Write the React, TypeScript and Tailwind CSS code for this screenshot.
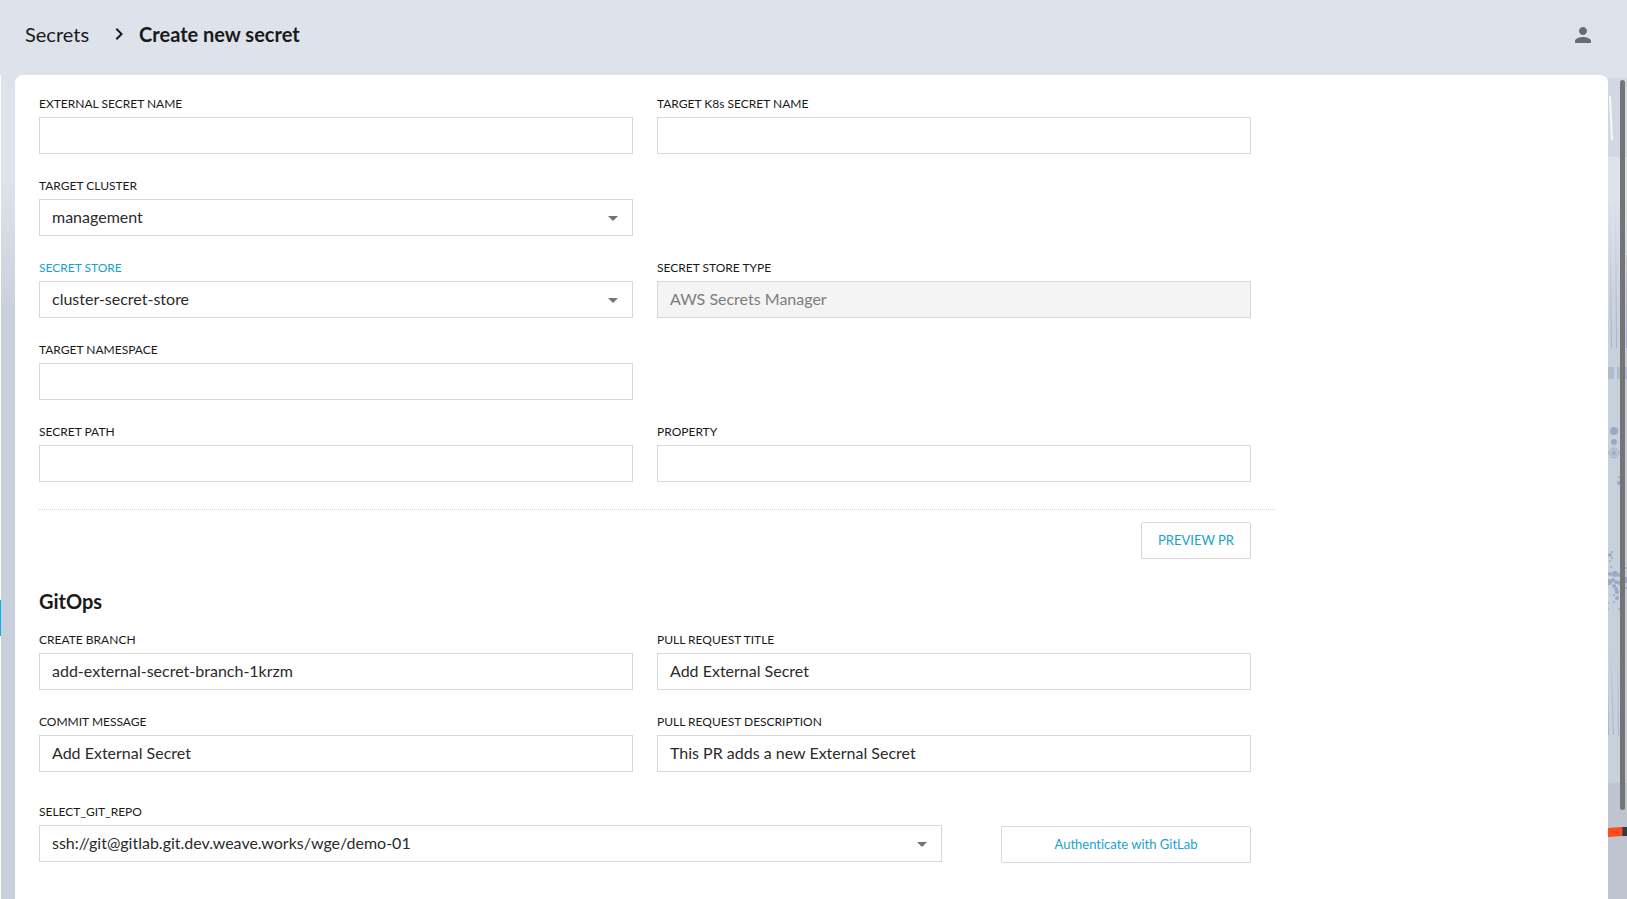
import React, { useState } from 'react';

interface FieldProps {
  id: string;
  label: string;
  className?: string;
}

interface TextFieldProps extends FieldProps {
  initial?: string;
  disabled?: boolean;
}

interface SelectFieldProps extends FieldProps {
  options: string[];
  active?: boolean;
}

const labelClasses = 'mb-[5px] block text-[12px] leading-4';
const controlClasses =
  'block h-[37px] w-full appearance-none rounded-none border border-[#d8d8d8] px-3 pb-0.5 text-[16px] focus:outline-none';

const TextField: React.FC<TextFieldProps> = ({ id, label, initial = '', disabled = false, className = '' }) => {
  const [value, setValue] = useState(initial);

  return (
    <div className={`mb-6 ${className}`}>
      <label htmlFor={id} className={`${labelClasses} text-[#1a1a1a]`}>
        {label}
      </label>
      <input
        id={id}
        type="text"
        value={value}
        disabled={disabled}
        onChange={(e) => setValue(e.target.value)}
        className={`${controlClasses} ${disabled ? 'bg-[#f4f4f4] text-[#7d7d7d]' : 'bg-white text-[#2b2b2b]'}`}
      />
    </div>
  );
};

const SelectField: React.FC<SelectFieldProps> = ({ id, label, options, active = false, className = '' }) => (
  <div className={`mb-6 ${className}`}>
    <label htmlFor={id} className={`${labelClasses} ${active ? 'text-[#1a9fd0]' : 'text-[#1a1a1a]'}`}>
      {label}
    </label>
    <div className="relative">
      <select id={id} className={`${controlClasses} bg-white pr-10 text-[#2b2b2b]`}>
        {options.map((option) => (
          <option key={option}>{option}</option>
        ))}
      </select>
      <svg
        viewBox="0 0 24 24"
        className="pointer-events-none absolute top-[7px] right-2 h-6 w-6"
        fill="#737373"
      >
        <path d="M7 10l5 5 5-5z" />
      </svg>
    </div>
  </div>
);

const outlineButton =
  'h-[37px] rounded-xs border border-[#d8d8d8] bg-white pb-0.5 text-[#1a9fd0] text-[13px] leading-5 hover:bg-gray-50';

// Small dots of the backdrop illustration: [x, y, radius]
const dots: [number, number, number][] = [
  [6, 356, 4],
  [6, 367, 3],
  [11, 402, 1],
  [11, 408, 2],
  [2, 480, 2],
  [4, 477, 1],
  [4, 483, 1],
  [2, 486, 1],
  [3, 492, 1],
  [2, 499, 2],
  [7, 499, 3],
  [11, 500, 2],
  [1, 507, 3],
  [5, 505, 2],
  [8, 507, 2],
  [11, 508, 2],
  [6, 511, 2],
  [8, 514, 2],
  [9, 517, 2],
  [6, 520, 1],
  [9, 523, 2],
  [6, 527, 1],
  [0, 528, 1],
  [0, 534, 1],
  [11, 534, 1],
  [18, 505, 3],
  [18, 493, 1],
  [18, 513, 1],
];

const Backdrop: React.FC = () => (
  <svg width="19" height="824" viewBox="0 0 19 824" className="block" aria-hidden="true">
    <defs>
      <linearGradient id="sky" x1="0" y1="0" x2="0" y2="1">
        <stop offset="0" stopColor="#dee2ea" />
        <stop offset="1" stopColor="#c8cfdd" />
      </linearGradient>
      <linearGradient id="streak" x1="0" y1="0" x2="0" y2="1">
        <stop offset="0" stopColor="#a9b3c8" stopOpacity="0" />
        <stop offset="1" stopColor="#a9b3c8" />
      </linearGradient>
    </defs>
    <rect width="19" height="3" fill="#dee2ea" />
    <rect y="3" width="19" height="79" fill="#d2d7e2" />
    <rect y="82" width="19" height="38" fill="#dee2ea" />
    <rect y="120" width="19" height="130" fill="url(#sky)" />
    <rect y="250" width="19" height="458" fill="#c8cfdd" />
    <rect y="708" width="19" height="116" fill="#bfc4d1" />
    <path d="M1 21h2l2 44H3z" fill="#f7f8fa" />
    <path d="M1 120h1l2 153H3zM7 120h1l1 153H8zM18 180h1v93h-1z" fill="url(#streak)" />
    <rect y="292" width="6" height="12" fill="#b1bbd0" />
    <rect x="9" y="292" width="10" height="12" fill="#b1bbd0" />
    {dots.map(([cx, cy, r], i) => (
      <circle key={i} cx={cx} cy={cy} r={r} fill="#9ca9c4" />
    ))}
    <g fill="none" stroke="#9ca9c4">
      <circle cx="6" cy="378" r="5" strokeWidth="0.8" />
      <circle cx="6" cy="378" r="3.2" strokeWidth="0.8" />
    </g>
    <circle cx="6" cy="378" r="2" fill="#9ca9c4" />
    <path d="M2 570h1l3 90H5zM9 570h1l1 90h-1zM0 590l1 70H0z" fill="url(#streak)" />
    <path d="M0 753l14-1v9l-14 1z" fill="#ff4d1c" />
    <rect x="14" y="752" width="1" height="9" fill="#8a3a3c" />
    <rect x="15" y="752" width="4" height="9" fill="#35384f" />
    <rect x="12" y="5" width="5" height="730" rx="2.5" fill="#737575" />
  </svg>
);

const Header: React.FC = () => (
  <header className="flex h-[75px] items-center justify-between pr-8 pl-[25px]">
    <nav className="flex items-center pb-[7px] text-[20px] leading-6 text-[#1a1a1a]" aria-label="Breadcrumb">
      <a href="#secrets">Secrets</a>
      <svg viewBox="0 0 24 24" className="mr-2 ml-[18px] h-6 w-6" fill="#1a1a1a">
        <path d="M10 6L8.59 7.41 13.17 12l-4.58 4.59L10 18l6-6z" />
      </svg>
      <span className="font-bold">Create new secret</span>
    </nav>
    <button type="button" aria-label="Account" className="pb-[5px]">
      <svg viewBox="0 0 24 24" className="h-6 w-6" fill="#6a6b6e">
        <path d="M12 12c2.21 0 4-1.79 4-4s-1.79-4-4-4-4 1.79-4 4 1.79 4 4 4zm0 2c-2.67 0-8 1.34-8 4v2h16v-2c0-2.66-5.33-4-8-4z" />
      </svg>
    </button>
  </header>
);

const SecretForm: React.FC = () => (
  <form className="w-4/5" onSubmit={(e) => e.preventDefault()}>
    <div className="grid grid-cols-2 gap-x-6 pr-6">
      <TextField id="secret-name" label="EXTERNAL SECRET NAME" />
      <TextField id="k8s-name" label="TARGET K8s SECRET NAME" />
      <SelectField id="cluster" label="TARGET CLUSTER" options={['management']} />
      <SelectField
        id="store"
        label="SECRET STORE"
        options={['cluster-secret-store']}
        active
        className="col-start-1"
      />
      <TextField id="store-type" label="SECRET STORE TYPE" initial="AWS Secrets Manager" disabled />
      <TextField id="namespace" label="TARGET NAMESPACE" />
      <TextField id="path" label="SECRET PATH" className="col-start-1" />
      <TextField id="property" label="PROPERTY" />
    </div>

    <div className="mt-[3px] flex justify-end border-t border-dotted border-[#d8d8d8] pt-3 pr-6">
      <button type="button" className={`${outlineButton} w-[110px]`}>
        PREVIEW PR
      </button>
    </div>

    <h2 className="mt-7 mb-[17px] text-[20px] leading-7 font-bold text-[#1a1a1a]">GitOps</h2>
    <div className="grid grid-cols-2 gap-x-6 pr-6">
      <TextField id="branch" label="CREATE BRANCH" initial="add-external-secret-branch-1krzm" />
      <TextField id="pr-title" label="PULL REQUEST TITLE" initial="Add External Secret" />
      <TextField id="commit" label="COMMIT MESSAGE" initial="Add External Secret" />
      <TextField id="pr-description" label="PULL REQUEST DESCRIPTION" initial="This PR adds a new External Secret" />
    </div>

    <div className="mt-2 flex items-end gap-[59px] pr-6">
      <SelectField
        id="repo"
        label="SELECT_GIT_REPO"
        options={['ssh://git@gitlab.git.dev.weave.works/wge/demo-01']}
        className="min-w-0 flex-1"
      />
      <button type="button" className={`${outlineButton} mb-[23px] w-[250px] shrink-0`}>
        Authenticate with GitLab
      </button>
    </div>
  </form>
);

export default function App() {
  return (
    <div className="flex min-h-screen flex-col bg-[#dee2ea] font-['Lato','Open_Sans',sans-serif] [font-variant-ligatures:none]">
      <Header />
      <div className="flex flex-1">
        {/* edge of the collapsed side menu */}
        <div className="w-[15px] border-l border-white bg-linear-to-b from-[#dee2ea] from-[108px] to-[#c8cfdd] to-[247px] pt-[525px]">
          <div className="-ml-px h-9 w-px bg-[#00b3ec]" />
        </div>
        <main className="min-w-0 flex-1 rounded-t-[8px] bg-white px-6 pt-[21px]">
          <SecretForm />
        </main>
        <div className="w-[19px] shrink-0 overflow-hidden bg-[#bfc4d1]">
          <Backdrop />
        </div>
      </div>
    </div>
  );
}
